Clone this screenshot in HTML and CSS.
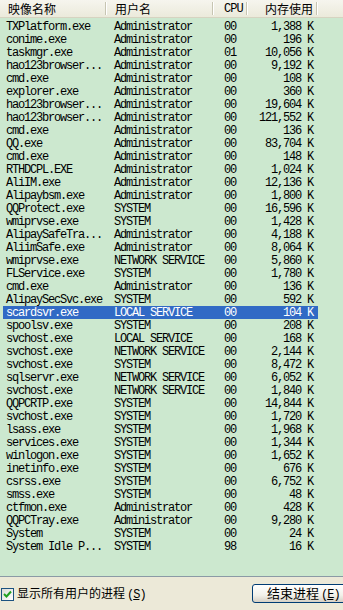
FILE: index.html
```html
<!DOCTYPE html>
<html lang="zh-CN">
<head>
  <meta charset="UTF-8">
  <title>任务管理器 - 进程</title>
  <link rel="stylesheet" href="styles.css">
</head>
<body>

  <div class="window">

    <!-- Process list -->
    <div class="list">
      <div class="head">
        <div class="hcol c-name">映像名称</div>
        <div class="hcol c-user">用户名</div>
        <div class="hcol c-cpu">CPU</div>
        <div class="hcol c-mem">内存使用</div>
        <div class="hcol c-rest"></div>
      </div>
      <div class="rows" id="rows"></div>
    </div>

    <!-- Bottom bar -->
    <div class="bottom">
      <label class="check">
        <span class="box">
          <svg width="9" height="9" viewBox="0 0 9 9"><path d="M1 4 L3.5 6.5 L8 1.5" fill="none" stroke="#21a121" stroke-width="2"/></svg>
        </span>
        <span class="check-text">显示所有用户的进程<span class="key">(<u>S</u>)</span></span>
      </label>
      <button class="end-btn">结束进程<span class="key">(<u>E</u>)</span></button>
    </div>

  </div>

  <script>
    (function() {
      const data = [
        ['TXPlatform.exe','Administrator','00','1,388 K'],
        ['conime.exe','Administrator','00','196 K'],
        ['taskmgr.exe','Administrator','01','10,056 K'],
        ['hao123browser...','Administrator','00','9,192 K'],
        ['cmd.exe','Administrator','00','108 K'],
        ['explorer.exe','Administrator','00','360 K'],
        ['hao123browser...','Administrator','00','19,604 K'],
        ['hao123browser...','Administrator','00','121,552 K'],
        ['cmd.exe','Administrator','00','136 K'],
        ['QQ.exe','Administrator','00','83,704 K'],
        ['cmd.exe','Administrator','00','148 K'],
        ['RTHDCPL.EXE','Administrator','00','1,024 K'],
        ['AliIM.exe','Administrator','00','12,136 K'],
        ['Alipaybsm.exe','Administrator','00','1,800 K'],
        ['QQProtect.exe','SYSTEM','00','16,596 K'],
        ['wmiprvse.exe','SYSTEM','00','1,428 K'],
        ['AlipaySafeTra...','Administrator','00','4,188 K'],
        ['AliimSafe.exe','Administrator','00','8,064 K'],
        ['wmiprvse.exe','NETWORK SERVICE','00','5,860 K'],
        ['FLService.exe','SYSTEM','00','1,780 K'],
        ['cmd.exe','Administrator','00','136 K'],
        ['AlipaySecSvc.exe','SYSTEM','00','592 K'],
        ['scardsvr.exe','LOCAL SERVICE','00','104 K', true],
        ['spoolsv.exe','SYSTEM','00','208 K'],
        ['svchost.exe','LOCAL SERVICE','00','168 K'],
        ['svchost.exe','NETWORK SERVICE','00','2,144 K'],
        ['svchost.exe','SYSTEM','00','8,472 K'],
        ['sqlservr.exe','NETWORK SERVICE','00','6,052 K'],
        ['svchost.exe','NETWORK SERVICE','00','1,840 K'],
        ['QQPCRTP.exe','SYSTEM','00','14,844 K'],
        ['svchost.exe','SYSTEM','00','1,720 K'],
        ['lsass.exe','SYSTEM','00','1,968 K'],
        ['services.exe','SYSTEM','00','1,344 K'],
        ['winlogon.exe','SYSTEM','00','1,652 K'],
        ['inetinfo.exe','SYSTEM','00','676 K'],
        ['csrss.exe','SYSTEM','00','6,752 K'],
        ['smss.exe','SYSTEM','00','48 K'],
        ['ctfmon.exe','Administrator','00','428 K'],
        ['QQPCTray.exe','Administrator','00','9,280 K'],
        ['System','SYSTEM','00','24 K'],
        ['System Idle P...','SYSTEM','98','16 K']
      ];
      const rows = document.getElementById('rows');
      data.forEach(d => {
        const r = document.createElement('div');
        r.className = 'row' + (d[4] ? ' selected' : '');
        r.innerHTML = '<span class="sel"><span class="c-name">' + d[0] + '</span>' +
          '<span class="c-user">' + d[1] + '</span>' +
          '<span class="c-cpu">' + d[2] + '</span>' +
          '<span class="c-mem">' + d[3] + '</span></span>';
        rows.appendChild(r);
      });
    })();
  </script>

</body>
</html>
```

FILE: styles.css
```css
/* Global */
body {
  margin: 0;
  width: 343px;
  height: 610px;
  overflow: hidden;
  background: #ece9d8;
  font-family: "Noto Sans CJK SC", "Liberation Sans", sans-serif;
  color: #000;
}

.window {
  display: flex;
  flex-direction: column;
  height: 610px;
}

/* List view */
.list {
  height: 576px;
  background: #cce8cf;
  border-bottom: 1px solid #8b9aa6;
  overflow: hidden;
}

/* Header */
.head {
  display: flex;
  height: 17px;
  background: linear-gradient(#f6f5ee, #ebeadb);
  border-bottom: 1px solid #d6d3c1;
  font-size: 12px;
  line-height: 18px;
  color: #000;
}
.hcol {
  position: relative;
  white-space: nowrap;
  box-sizing: border-box;
}
.hcol::after {
  content: "";
  position: absolute;
  right: 0;
  top: 2px;
  bottom: 2px;
  width: 1px;
  background: #c7c5b2;
  box-shadow: 1px 0 0 #fff;
}
.hcol.c-rest::after { display: none; }

.head .c-name { width: 106px; padding-left: 8px; }
.head .c-user { width: 107px; padding-left: 9px; }
.head .c-cpu  { width: 34px; padding-left: 11px; font-family: "Liberation Mono", monospace; font-size: 12px; letter-spacing: -1px; }
.head .c-mem  { width: 70px; padding-left: 18px; }
.head .c-rest { flex: 1; }

/* Rows */
.rows {
  padding-top: 2px;
}
.row {
  height: 13px;
  font-family: "Liberation Mono", "Noto Sans CJK SC", monospace;
  font-size: 12px;
  letter-spacing: -1.2px;
  line-height: 13px;
  white-space: nowrap;
}
.sel {
  display: flex;
  height: 13px;
  width: 315px;
  margin-left: 3px;
}
.sel > span { padding-top: 1px; box-sizing: border-box; }
.row .c-name { width: 103px; padding-left: 3px; }
.row .c-user { width: 107px; padding-left: 8px; }
.row .c-cpu  { width: 34px; padding-left: 11px; }
.row .c-mem  { width: 71px; padding-right: 5px; text-align: right; }

.row.selected .sel {
  background: #316ac5;
  color: #fff;
}

/* Bottom bar */
.bottom {
  flex: 1;
  display: flex;
  align-items: flex-start;
  justify-content: space-between;
  padding-top: 8px;
}

.check {
  display: flex;
  align-items: center;
  gap: 3px;
  padding-left: 1px;
  font-size: 12px;
  line-height: 15px;
}
.box {
  width: 11px;
  height: 11px;
  border: 1px solid #1c5180;
  background: linear-gradient(135deg, #dcdcd7, #fff);
  display: flex;
  align-items: center;
  justify-content: center;
}
.key {
  font-family: "Liberation Mono", monospace;
  font-size: 12px;
  letter-spacing: -1px;
  margin-left: 2px;
}

.end-btn {
  margin-top: -1px;
  margin-right: -14px;
  width: 105px;
  height: 19px;
  padding: 0 0 0 14px;
  border: 1px solid #003c74;
  border-radius: 3px;
  background: linear-gradient(#ffffff, #f2f1ea 60%, #d6d0c5);
  font-family: "Noto Sans CJK SC", sans-serif;
  font-size: 13px;
  line-height: 16px;
  text-align: left;
  color: #000;
}
```
